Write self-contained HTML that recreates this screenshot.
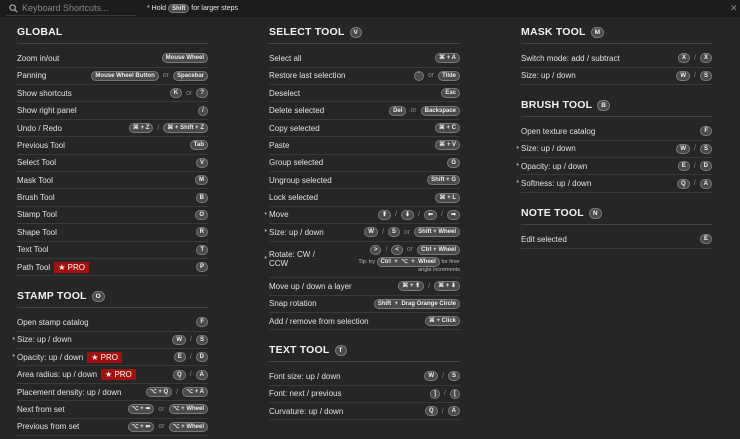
<!DOCTYPE html>
<html><head><meta charset="utf-8"><style>
*{box-sizing:border-box;margin:0;padding:0}
body{width:740px;height:439px;background:#262626;font-family:"Liberation Sans",sans-serif;color:#e2e2e2;position:relative;overflow:hidden}
.top{position:absolute;left:0;top:0;width:740px;height:17px;background:#1c1c1c}
.search{position:absolute;left:6px;top:2px;width:130px;height:14px;border-bottom:1px solid #3a3a3a;font-size:9px;color:#888;line-height:12px;padding-left:16px}
.search svg{position:absolute;left:3px;top:2px}
.hint{position:absolute;left:147px;top:4px;font-size:7px;color:#e8e8e8;line-height:9px}
.x{position:absolute;left:730px;top:3px;font-size:9px;color:#888}
.col{position:absolute;width:191px}
.h{height:31px;border-bottom:1px solid #444;position:relative;margin-bottom:6.6px}
.h span{position:absolute;left:0;top:13px;line-height:12px;font-size:10.5px;font-weight:bold;letter-spacing:.2px;color:#f0f0f0;white-space:nowrap}
.h span .k{position:static;vertical-align:1px;margin-left:5px;font-weight:bold;border-radius:6px;height:11px;line-height:9px;font-size:6.5px}
.r{height:17.4px;border-bottom:1px solid #393939;display:flex;align-items:center;justify-content:space-between;font-size:8px;position:relative}
.r.t{height:36.6px}
.s{position:absolute;left:-5px;top:5px;font-size:7px}
.keys{display:flex;align-items:center;gap:4px;color:#888;font-size:7px}
.k{display:inline-block;background:#4a4a4a;border:1px solid #7a7a7a;border-radius:5px;height:10px;line-height:8px;padding:0 3px;font-size:6px;color:#eee;font-weight:bold;min-width:10px;text-align:center;white-space:nowrap}
.pro{display:inline-block;background:#a3100e;color:#fff;font-size:8px;padding:0 4px;height:11px;line-height:11px;margin-left:4px}
.rot{display:flex;flex-direction:column;align-items:flex-end;gap:2px}
.tip{font-size:5.5px;color:#bbb;text-align:right;line-height:7px}
</style></head><body>
<div class="top"></div>
<div class="search"><svg width="9" height="9" viewBox="0 0 10 10"><circle cx="4" cy="4" r="3" stroke="#aaa" stroke-width="1.3" fill="none"/><path d="M6.2 6.2L9 9" stroke="#aaa" stroke-width="1.3"/></svg>Keyboard Shortcuts...</div>
<div class="hint">* Hold <span class="k" style="height:9px">Shift</span> for larger steps</div>
<div class="x">✕</div>

<div class="col" style="left:17px;top:12.7px">
<div class="h"><span>GLOBAL</span></div>
<div class="r">Zoom in/out<div class="keys"><span class="k">Mouse Wheel</span></div></div>
<div class="r">Panning<div class="keys"><span class="k">Mouse Wheel Button</span>or<span class="k">Spacebar</span></div></div>
<div class="r">Show shortcuts<div class="keys"><span class="k">K</span>or<span class="k">?</span></div></div>
<div class="r">Show right panel<div class="keys"><span class="k">/</span></div></div>
<div class="r">Undo / Redo<div class="keys"><span class="k">⌘ + Z</span>/<span class="k">⌘ + Shift + Z</span></div></div>
<div class="r">Previous Tool<div class="keys"><span class="k">Tab</span></div></div>
<div class="r">Select Tool<div class="keys"><span class="k">V</span></div></div>
<div class="r">Mask Tool<div class="keys"><span class="k">M</span></div></div>
<div class="r">Brush Tool<div class="keys"><span class="k">B</span></div></div>
<div class="r">Stamp Tool<div class="keys"><span class="k">O</span></div></div>
<div class="r">Shape Tool<div class="keys"><span class="k">R</span></div></div>
<div class="r">Text Tool<div class="keys"><span class="k">T</span></div></div>
<div class="r"><span>Path Tool<span class="pro">★ PRO</span></span><div class="keys"><span class="k">P</span></div></div>
</div>

<div class="col" style="left:17px;top:276.7px">
<div class="h"><span>STAMP TOOL<span class="k">O</span></span></div>
<div class="r">Open stamp catalog<div class="keys"><span class="k">F</span></div></div>
<div class="r"><i class="s">*</i>Size: up / down<div class="keys"><span class="k">W</span>/<span class="k">S</span></div></div>
<div class="r"><i class="s">*</i><span>Opacity: up / down<span class="pro">★ PRO</span></span><div class="keys"><span class="k">E</span>/<span class="k">D</span></div></div>
<div class="r"><span>Area radius: up / down<span class="pro">★ PRO</span></span><div class="keys"><span class="k">Q</span>/<span class="k">A</span></div></div>
<div class="r">Placement density: up / down<div class="keys"><span class="k">⌥ + Q</span>/<span class="k">⌥ + A</span></div></div>
<div class="r">Next from set<div class="keys"><span class="k">⌥ + ➡</span>or<span class="k">⌥ + Wheel</span></div></div>
<div class="r">Previous from set<div class="keys"><span class="k">⌥ + ⬅</span>or<span class="k">⌥ + Wheel</span></div></div>
</div>

<div class="col" style="left:269px;top:12.7px">
<div class="h"><span>SELECT TOOL<span class="k">V</span></span></div>
<div class="r">Select all<div class="keys"><span class="k">⌘ + A</span></div></div>
<div class="r">Restore last selection<div class="keys"><span class="k">`</span>or<span class="k">Tilde</span></div></div>
<div class="r">Deselect<div class="keys"><span class="k">Esc</span></div></div>
<div class="r">Delete selected<div class="keys"><span class="k">Del</span>or<span class="k">Backspace</span></div></div>
<div class="r">Copy selected<div class="keys"><span class="k">⌘ + C</span></div></div>
<div class="r">Paste<div class="keys"><span class="k">⌘ + V</span></div></div>
<div class="r">Group selected<div class="keys"><span class="k">G</span></div></div>
<div class="r">Ungroup selected<div class="keys"><span class="k">Shift + G</span></div></div>
<div class="r">Lock selected<div class="keys"><span class="k">⌘ + L</span></div></div>
<div class="r"><i class="s">*</i>Move<div class="keys"><span class="k">⬆</span>/<span class="k">⬇</span>/<span class="k">⬅</span>/<span class="k">➡</span></div></div>
<div class="r"><i class="s">*</i>Size: up / down<div class="keys"><span class="k">W</span>/<span class="k">S</span>or<span class="k">Shift + Wheel</span></div></div>
<div class="r t"><i class="s" style="top:14px">*</i><span style="line-height:9px">Rotate: CW /<br>CCW</span><div class="rot"><div class="keys"><span class="k">&gt;</span>/<span class="k">&lt;</span>or<span class="k">Ctrl + Wheel</span></div><div class="tip">Tip: try <span class="k">Ctrl&nbsp; + &nbsp;⌥&nbsp; + &nbsp;Wheel</span> for finer<br>angle increments</div></div></div>
<div class="r">Move up / down a layer<div class="keys"><span class="k">⌘ + ⬆</span>/<span class="k">⌘ + ⬇</span></div></div>
<div class="r">Snap rotation<div class="keys"><span class="k">Shift &nbsp;+&nbsp; Drag Orange Circle</span></div></div>
<div class="r">Add / remove from selection<div class="keys"><span class="k">⌘ + Click</span></div></div>
</div>

<div class="col" style="left:269px;top:330.7px">
<div class="h"><span>TEXT TOOL<span class="k">T</span></span></div>
<div class="r">Font size: up / down<div class="keys"><span class="k">W</span>/<span class="k">S</span></div></div>
<div class="r">Font: next / previous<div class="keys"><span class="k">]</span>/<span class="k">[</span></div></div>
<div class="r">Curvature: up / down<div class="keys"><span class="k">Q</span>/<span class="k">A</span></div></div>
</div>

<div class="col" style="left:521px;top:12.7px">
<div class="h"><span>MASK TOOL<span class="k">M</span></span></div>
<div class="r">Switch mode: add / subtract<div class="keys"><span class="k">X</span>/<span class="k">X</span></div></div>
<div class="r">Size: up / down<div class="keys"><span class="k">W</span>/<span class="k">S</span></div></div>
</div>
<div class="col" style="left:521px;top:85.7px">
<div class="h"><span>BRUSH TOOL<span class="k">B</span></span></div>
<div class="r">Open texture catalog<div class="keys"><span class="k">F</span></div></div>
<div class="r"><i class="s">*</i>Size: up / down<div class="keys"><span class="k">W</span>/<span class="k">S</span></div></div>
<div class="r"><i class="s">*</i>Opacity: up / down<div class="keys"><span class="k">E</span>/<span class="k">D</span></div></div>
<div class="r"><i class="s">*</i>Softness: up / down<div class="keys"><span class="k">Q</span>/<span class="k">A</span></div></div>
</div>
<div class="col" style="left:521px;top:193.7px">
<div class="h"><span>NOTE TOOL<span class="k">N</span></span></div>
<div class="r">Edit selected<div class="keys"><span class="k">E</span></div></div>
</div>
</body></html>
